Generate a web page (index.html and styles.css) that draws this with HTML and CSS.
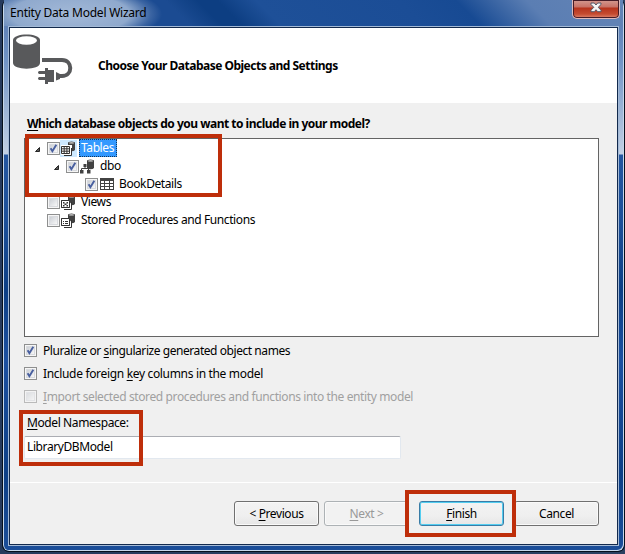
FILE: index.html
```html
<!DOCTYPE html>
<html lang="en">
<head>
<meta charset="utf-8">
<title>Entity Data Model Wizard</title>
<link rel="stylesheet" href="styles.css">
</head>
<body>
<svg class="defs" aria-hidden="true">
  <defs>
    <linearGradient id="box" x1="0" y1="0" x2="1" y2="1"><stop offset="0" stop-color="#c9cdd3"/><stop offset="1" stop-color="#fafafa"/></linearGradient>
    <symbol id="off" viewBox="0 0 13 13"><rect x=".5" y=".5" width="12" height="12" fill="#f6f6f6" stroke="#8e8f8f"/><rect x="2.5" y="2.5" width="8" height="8" fill="url(#box)" stroke="#d8dade"/></symbol>
    <symbol id="on" viewBox="0 0 13 13"><use href="#off"/><path d="M3.6 6.2 5.4 9.2 9.3 2.8" fill="none" stroke="#485f9f" stroke-width="1.9"/></symbol>
    <symbol id="db" viewBox="0 0 15 15"><path d="M7 2Q7 .5 10.500.5T14 2V9Q13 10.300 10.500 10.300L7 10Z" fill="#424242"/><ellipse cx="10.500" cy="1.900" rx="2.600" ry=".7" fill="#ddd"/></symbol>
    <symbol id="arrow" viewBox="0 0 7 7"><path d="M5.500 1.500V5.500H1.500Z" fill="#595959" stroke="#262626"/></symbol>
  </defs>
</svg>
<div class="window">
  <div class="titlebar"><span class="caption">Entity Data Model Wizard</span>
    <div class="close"><svg width="12" height="11" viewBox="0 0 12 11"><path d="M1 1h3.300L6 3l1.700-2H11v1.500L8.200 5.300 11 8.200v1.500H7.700L6 7.700l-1.700 2H1V8.200l2.800-2.900L1 2.500Z" fill="#f5f5f5" stroke="#535666"/></svg></div>
  </div>
  <main class="client">
    <header class="head">
      <svg class="logo" width="62" height="52" viewBox="0 0 62 52">
        <path d="M0 6C0-1.500 27-1.500 27 6V29C27 36.500 0 36.500 0 29Z" fill="#58595b"/><ellipse cx="13.500" cy="6.500" rx="10.500" ry="4.200" fill="#fff"/>
        <path d="M29 26H49C60 26 60 42 49 42H46" fill="none" stroke="#58595b" stroke-width="4"/>
        <path d="M32 34h3v2h6v12h-6v2h-3v-4h-6q-2-1.500 0-3h6v-3h-6q-2-1.500 0-3h6ZM43 38l4 2v5l-4 1.500Z" fill="#58595b"/>
      </svg>
      <h1>Choose Your Database Objects and Settings</h1>
    </header>
    <h2><u>W</u>hich database objects do you want to include in your model?</h2>
    <div class="tree">
      <div class="row"><svg class="exp"><use href="#arrow"/></svg><svg class="check"><use href="#on"/></svg><svg class="icon hot" viewBox="0 0 15 15"><use href="#db"/><path d="M0 4h11v10H0Z" fill="#fff"/><path d="M.5 5.500h8v7h-8ZM.5 7.800h8M.5 10.200h8M3.200 6v7M5.900 6v7M3 14.500h7.500V7" fill="none" stroke="#333"/></svg><span class="name selected"><b>Tables</b></span></div>
      <div class="row l1"><svg class="exp"><use href="#arrow"/></svg><svg class="check"><use href="#on"/></svg><svg class="icon" viewBox="0 0 15 15"><use href="#db"/><path d="M0 11h3.500v3.500H0ZM7 11h3.500v3.500H7ZM3.500 5h3v3h-3Z" fill="#424242"/><path d="M5 7v2.500M1.500 12V9.500h7V12" fill="none" stroke="#424242"/></svg><span class="name"><b>dbo</b></span></div>
      <div class="row l2"><svg class="check"><use href="#on"/></svg><svg class="icon grid" viewBox="0 0 14 12"><path d="M0 0h14v12H0Z" fill="#424242"/><path d="M1 3h3v2H1Zm4 0h4v2H5Zm5 0h3v2h-3ZM1 6h3v2H1Zm4 0h4v2H5Zm5 0h3v2h-3ZM1 9h3v2H1Zm4 0h4v2H5Zm5 0h3v2h-3Z" fill="#fff"/></svg><span class="name"><b>BookDetails</b></span></div>
      <div class="row root"><svg class="check"><use href="#off"/></svg><svg class="icon" viewBox="0 0 15 15"><use href="#db"/><path d="M.5 5.500h8v7h-8ZM3 14.500h7.500V7" fill="#fff" stroke="#333"/><path d="M.5 5.500h8v7h-8Z" fill="#fff" stroke="#333"/><path d="M2 7h1.500v1.500H2Zm3.500 0H7v1.500H5.500ZM3.500 8.500h2V10h-2ZM2 10h1.500v1.500H2Zm3.500 0H7v1.500H5.500Z" fill="#333"/></svg><span class="name"><b>Views</b></span></div>
      <div class="row root"><svg class="check"><use href="#off"/></svg><svg class="icon" viewBox="0 0 15 15"><use href="#db"/><path d="M3 14.500h7.500V7M.5 5.500h8v7h-8Z" fill="#fff" stroke="#333"/><path d="M.5 5.500h8v7h-8Z" fill="#fff" stroke="#333"/><path d="M2 8.500h1M4 8.500h3M2 10.500h1M4 10.500h3" stroke="#333"/></svg><span class="name"><b>Stored Procedures and Functions</b></span></div>
      <div class="mark mark-tree"></div>
    </div>
    <div class="options">
      <label class="plural"><svg class="check"><use href="#on"/></svg><span>Pluralize or <u>s</u>ingularize generated object names</span></label>
      <label class="foreign"><svg class="check"><use href="#on"/></svg><span>Include foreign <u>k</u>ey columns in the model</span></label>
      <label class="disabled"><svg class="check"><use href="#off"/></svg><span><u>I</u>mport selected stored procedures and functions into the entity model</span></label>
    </div>
    <section class="namespace">
      <div class="nslabel"><u>M</u>odel Namespace:</div>
      <div class="field"><span>LibraryDBModel</span></div>
      <div class="mark mark-name"></div>
    </section>
    <footer>
      <div class="button"><span>&lt; <u>P</u>revious</span></div>
      <div class="button inactive"><span><u>N</u>ext &gt;</span></div>
      <div class="button primary"><span><u>F</u>inish</span><div class="mark mark-finish"></div></div>
      <div class="button"><span>Cancel</span></div>
    </footer>
  </main>
</div>
</body>
</html>
```
FILE: styles.css
```css
* { box-sizing: border-box; }
body { margin: 0; width: 625px; height: 554px; overflow: hidden; background: linear-gradient(90deg, #263a5c, #2c4161); font: 12px/18px "Noto Sans", "Open Sans", sans-serif; color: #000; letter-spacing: -.4px; }
.defs { position: absolute; width: 0; height: 0; }
u { text-decoration: underline; text-underline-offset: 2px; text-decoration-thickness: 1px; text-decoration-skip-ink: none; }
.window { margin-left: 2px; width: 623px; height: 552px; padding: 0 5px 5px; border: 1px solid #06101c; border-top: 0; border-radius: 6px 6px 7px 7px; box-shadow: inset 1px 0 #c6d7ea, inset -1px -1px #c6d7ea; background: linear-gradient(180deg, #5575ad 0, #7093c5 60px, #c2d0e4 154px, #2456a0 155px, #1d5099 220px, #0d3f85 290px, #1c50a0 360px, #0d3f86 475px, #1b4e99 100%); }
.titlebar { height: 26px; margin: 0 -4px; padding: 0 3px 0 6px; display: flex; justify-content: space-between; background: radial-gradient(ellipse 92px 30px at 66px 14px, #a3b9d8 0, #8fa9cd 65%, rgba(90, 125, 178, .5) 88%, transparent 100%), linear-gradient(45deg, #6f91c0 0, #1b4b92 8%, #1b4b92 29%, #0d3e82 34%, #0d3e82 37%, #1e5098 43%, #1b4d96 65%, #174a93 74%, #5b7eb3 85%, #6384b6 100%); }
.caption { padding-top: 4px; letter-spacing: -.23px; }
.close { width: 48px; height: 19px; display: flex; justify-content: center; padding-top: 2px; border: 1px solid #ddb9bb; border-top: 0; border-radius: 0 0 5px 5px; box-shadow: inset 0 0 0 1px #471c27; background: linear-gradient(#d49a91 0, #c87166 7px, #b6331d 8px, #c54b30 14px, #df8770 100%); }
.client { width: 611px; height: 520px; border: 1px solid #a4bad6; box-shadow: inset 0 0 0 1px #12294c; padding: 1px; background: #f0f0f0; }
.head { height: 75px; background: #fff; display: flex; padding: 6px 0 0 3px; }
.logo { flex: none; }
h1, h2 { margin: 0; font-size: 12px; line-height: 18px; font-weight: 700; white-space: nowrap; letter-spacing: -.5px; }
h1 { margin: 23px 0 0 23px; }
h2 { margin: 12px 0 0 17px; }
b { font-weight: 400; }
.tree { position: relative; margin: 5px 18px 0 14px; height: 199px; border: 1px solid #646464; background: #fff; }
.row { display: flex; height: 18px; align-items: center; padding-left: 9px; }
.l1 { padding-left: 28px; }
.l2 { padding-left: 60px; }
.root { padding-left: 22px; }
.exp { width: 7px; height: 7px; margin: 3px 6px 0 0; }
.check { width: 13px; height: 13px; flex: none; }
.icon { width: 15px; height: 15px; margin: 0 3px 0 1px; }
.hot { background: #cce8ff; box-shadow: 0 0 0 1px #cce8ff; }
.grid { width: 14px; height: 12px; margin: 0 3px 0 2px; }
.name { padding: 0 3px 0 2px; line-height: 17px; height: 18px; white-space: nowrap; }
.selected { background: #3399ff; outline: 1px dotted #12365b; outline-offset: -1px; color: #fff; }
.mark { position: absolute; border: 4px solid #be2e0a; }
.mark-tree { left: 0; top: -5px; width: 197px; height: 63px; }
.options { margin: 5px 0 0 14px; }
label { display: flex; height: 23px; align-items: center; gap: 6px; padding-bottom: 6px; white-space: nowrap; }
.plural { letter-spacing: -.44px; }
.foreign { letter-spacing: -.33px; }
.disabled { color: #a0a0a0; letter-spacing: -.385px; }
.disabled .check { opacity: .55; }
.namespace { position: relative; margin: 2px 0 0 14px; height: 69px; }
.nslabel { padding-left: 3px; height: 23px; line-height: 19px; }
.field { width: 377px; height: 23px; border: 1px solid #e2e8ef; border-top-color: #abadb3; border-radius: 2px; background: #fff; padding: 1px 2px 0; line-height: 18px; }
.mark-name { left: -5px; top: -3px; width: 124px; height: 56px; }
footer { display: flex; justify-content: flex-end; gap: 5px; border-top: 1px solid #fff; padding: 18px 18px 0 0; height: 62px; }
.button { position: relative; width: 85px; height: 25px; border: 1px solid #707070; border-radius: 3px; box-shadow: inset 0 0 0 1px #fafafa; background: linear-gradient(#f3f3f3, #efefef 60%, #e6e6e6); text-align: center; line-height: 23px; }
.inactive { color: #999; border-color: #adb2b5; background: #f2f2f2; }
.primary { margin: 0 5px; border-color: #397ca6; box-shadow: inset 0 0 0 1px #53cdf0; z-index: 1; }
.mark-finish { left: -15px; top: -12px; width: 111px; height: 47px; }
```
